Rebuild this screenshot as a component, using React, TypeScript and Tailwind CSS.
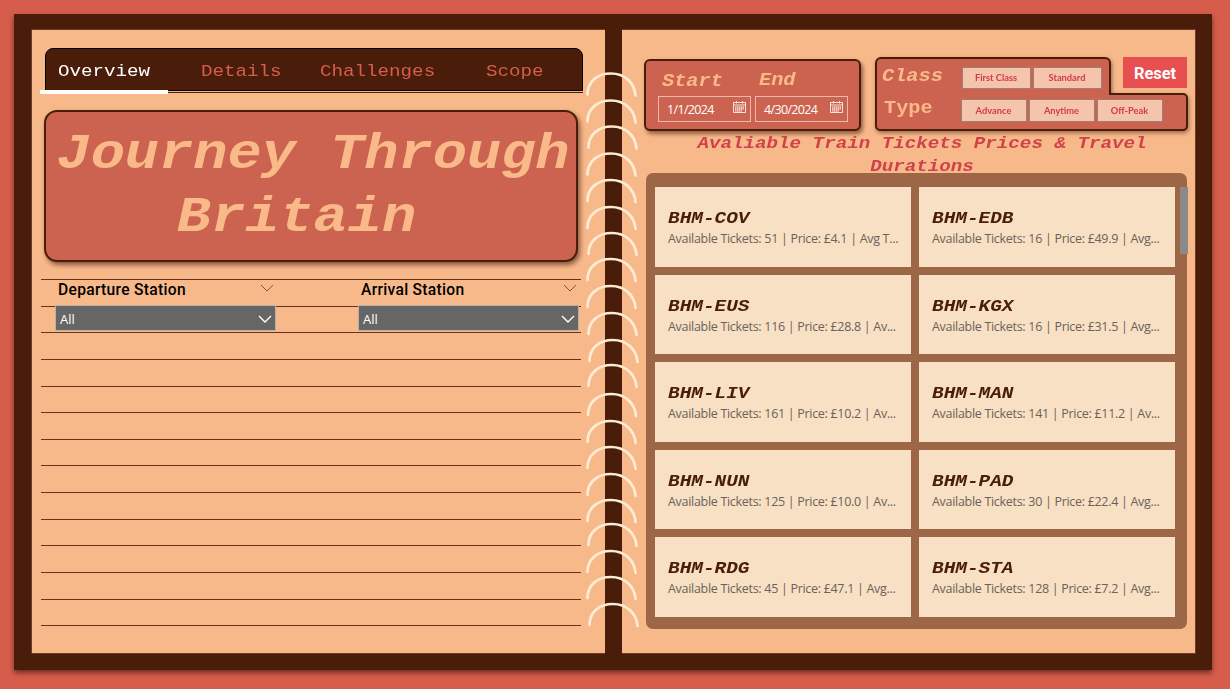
import React from "react";

const MONO = "font-['Liberation_Mono',monospace]";
const SQUAT = "inline-block origin-[50%_75%] scale-y-[0.88]";

const tabs = [
  { label: "Overview", pos: "w-[143px]", active: true },
  { label: "Details", pos: "w-[119px]" },
  { label: "Challenges", pos: "w-[166px]" },
  { label: "Scope", pos: "" },
];

const routes = [
  ["BHM-COV", "Available Tickets: 51 | Price: £4.1 | Avg T..."],
  ["BHM-EDB", "Available Tickets: 16 | Price: £49.9 | Avg..."],
  ["BHM-EUS", "Available Tickets: 116 | Price: £28.8 | Av..."],
  ["BHM-KGX", "Available Tickets: 16 | Price: £31.5 | Avg..."],
  ["BHM-LIV", "Available Tickets: 161 | Price: £10.2 | Av..."],
  ["BHM-MAN", "Available Tickets: 141 | Price: £11.2 | Av..."],
  ["BHM-NUN", "Available Tickets: 125 | Price: £10.0 | Av..."],
  ["BHM-PAD", "Available Tickets: 30 | Price: £22.4 | Avg..."],
  ["BHM-RDG", "Available Tickets: 45 | Price: £47.1 | Avg..."],
  ["BHM-STA", "Available Tickets: 128 | Price: £7.2 | Avg..."],
];

const rings = [
  [586.5, 72.5], [586.5, 99.5], [587.5, 125.5], [586.5, 152.5], [586.5, 179], [586.5, 206], [587.5, 232],
  [586.5, 258], [586.5, 285], [587.5, 312], [588.5, 339], [587.5, 364], [587, 393], [586.5, 420],
  [586.5, 446], [586.5, 473], [586.5, 499], [587.5, 523], [586.5, 550], [586.5, 576], [588.5, 603],
];

const lines = Array.from({ length: 14 }, (_, i) => i);

function Chevron({ color, width }: { color: string; width: number }) {
  return (
    <svg width="14" height="8" viewBox="0 0 14 8" fill="none" stroke={color} strokeWidth={width}>
      <path d="M1 1 L7 7 L13 1" />
    </svg>
  );
}

function CalendarIcon() {
  return (
    <svg width="13" height="13" viewBox="0 0 13 13" fill="none" stroke="#fbe6df" strokeWidth="1">
      <path d="M0.5 1.5h12v10h-12z M0.5 4h12 M3.5 0v2.5 M9.5 0v2.5" />
      <path d="M2.5 6h8 M2.5 8h8 M2.5 10h6 M2.5 5.5v5 M4.5 5.5v5 M6.5 5.5v5 M8.5 5.5v5 M10.5 5.5v3" strokeWidth="0.7" />
    </svg>
  );
}

function Slicer({ title }: { title: string }) {
  return (
    <div className="w-[221px]">
      <div className="flex h-[26px] items-start justify-between pt-px pr-[2px] pl-[3px]">
        <span className="font-['Roboto',sans-serif] text-[15.6px] leading-[20px] font-medium tracking-[0.3px] whitespace-nowrap text-black">
          {title}
        </span>
        <span className="mt-[4px]">
          <Chevron color="#7b5a45" width={1} />
        </span>
      </div>
      <div className="flex h-[26px] items-center justify-between border border-[#b9b0a8] bg-[#666666] pt-px pr-[3px] pl-[4px]">
        <span className="pt-px font-['Open_Sans',sans-serif] text-[13px] leading-none text-white">All</span>
        <Chevron color="#ffffff" width={1.4} />
      </div>
    </div>
  );
}

function DateField({ label, value, labelClass }: { label: string; value: string; labelClass: string }) {
  return (
    <div className="w-[93px]">
      <div className={`${MONO} h-[35px] text-[20.3px] leading-[22px] font-bold text-[#f9b988] italic ${labelClass}`}>
        <span className={SQUAT}>{label}</span>
      </div>
      <div className="flex h-[26px] items-center justify-between border border-[#ecb9ab] pr-[4px] pl-[8px]">
        <span className="pt-[2px] font-['Open_Sans',sans-serif] text-[12.5px] leading-none tracking-[-0.65px] text-white">
          {value}
        </span>
        <span className="-mt-[3px]">
          <CalendarIcon />
        </span>
      </div>
    </div>
  );
}

function Chip({ label, size }: { label: string; size: string }) {
  return (
    <button
      className={`flex items-center justify-center border border-[#9b8078] bg-[#f4c4ac] pr-px font-['Lato',sans-serif] text-[9.3px] leading-none font-bold whitespace-nowrap text-[#d03c48] ${size}`}
    >
      {label}
    </button>
  );
}

export default function App() {
  return (
    <div className="relative h-[689px] w-[1230px] overflow-hidden bg-[#d65d4c] pt-[14px] pl-[14px]">
      <div className="flex h-[656px] w-[1198px] bg-[#491d0a] pt-[15px] pl-[17px] shadow-[0_3px_5px_rgba(60,20,10,0.65)]">
        <section className="h-[625px] w-[574px] border border-r-0 border-[#6e3c22] bg-[#f8b98a] pt-[18px] pl-[8px]">
          <nav className="ml-[5px] flex h-[43px] w-[538px] rounded-t-[8px] border border-black bg-[#491d0a] pt-[11px] pl-[12px]">
            {tabs.map((t) => (
              <span
                key={t.label}
                className={`${MONO} text-[19.2px] leading-[22px] ${t.pos} ${t.active ? "text-white" : "text-[#d65d4c]"}`}
              >
                <span className={SQUAT}>{t.label}</span>
              </span>
            ))}
          </nav>
          <div className="ml-[5px] h-[2px] w-[538px] border-b border-[#491d0a]" />
          <div className="-mt-[3px] h-[4px] w-[128px] bg-white" />

          <h1
            className={`${MONO} mt-[16px] ml-[4px] h-[152px] w-[534px] rounded-[13px] border-2 border-[#491d0a] bg-[#cc6350] pt-[10px] pl-[4px] text-center text-[57px] leading-[63px] font-bold whitespace-nowrap text-[#f9b988] italic shadow-[2px_3px_5px_rgba(60,20,10,0.6)]`}
          >
            <span className={SQUAT}>Journey Through</span>
            <br />
            <span className={`${SQUAT} pr-[33px]`}>Britain</span>
          </h1>

          <div className="mt-[17px] ml-px grid w-[540px]">
            <div className="col-start-1 row-start-1">
              {lines.map((i) => (
                <div key={i} className="h-[26.65px] border-t border-[#6b3018]" />
              ))}
            </div>
            <div className="col-start-1 row-start-1 flex gap-[82px] pl-[14px]">
              <Slicer title="Departure Station" />
              <Slicer title="Arrival Station" />
            </div>
          </div>
        </section>

        <section className="ml-[17px] h-[625px] w-[574px] border border-l-0 border-[#6e3c22] bg-[#f8b98a] pt-[27px] pl-[22px]">
          <div className="flex h-[75px] items-start">
            <div className="mt-[2px] flex h-[72px] w-[217px] gap-[4px] rounded-[6px] border-2 border-[#491d0a] bg-[#cc6350] pl-[12px] shadow-[2px_3px_4px_rgba(60,20,10,0.55)]">
              <DateField label="Start" value="1/1/2024" labelClass="pt-[9px] pl-[4px]" />
              <DateField label="End" value="4/30/2024" labelClass="pt-[8px] pl-[4px]" />
            </div>

            <div className="ml-[14px] h-[74px] w-[313px] drop-shadow-[1px_2px_2px_rgba(60,20,10,0.5)]">
              <div className="relative flex h-[38px] w-[236px] rounded-t-[6px] border-2 border-b-0 border-[#491d0a] bg-[#cc6350] pl-[5px]">
                <span className={`${MONO} w-[80px] pt-[6px] text-[20.3px] leading-[22px] font-bold text-[#f9b988] italic`}>
                  <span className={SQUAT}>Class</span>
                </span>
                <div className="flex gap-[2px] pt-[8px]">
                  <Chip label="First Class" size="h-[22px] w-[69px]" />
                  <Chip label="Standard" size="h-[22px] w-[69px]" />
                </div>
              </div>
              <div className="-mt-[2px] flex h-[38px] w-[313px] rounded-[5px] rounded-tl-none border-2 border-[#491d0a] bg-[#cc6350] pl-[7px]">
                <span className={`${MONO} w-[77px] pt-[2px] text-[20.3px] leading-[22px] font-bold text-[#f9b988]`}>
                  <span className={SQUAT}>Type</span>
                </span>
                <div className="flex gap-[2px] pt-[4px]">
                  <Chip label="Advance" size="h-[23px] w-[66px]" />
                  <Chip label="Anytime" size="h-[23px] w-[66px]" />
                  <Chip label="Off-Peak" size="h-[23px] w-[66px]" />
                </div>
              </div>
            </div>
            <button className="-ml-[65px] flex h-[31px] w-[64px] items-center justify-center bg-[#e84f50] pt-[3px] font-['Roboto',sans-serif] text-[16.4px] leading-none font-bold text-white">
              Reset
            </button>
          </div>

          <h2
            className={`${MONO} h-[41px] w-[556px] text-center text-[19.2px] leading-[23px] font-bold whitespace-nowrap text-[#d0424b] italic`}
          >
            <span className={SQUAT}>Avaliable Train Tickets Prices &amp; Travel</span>
            <br />
            <span className={SQUAT}>Durations</span>
          </h2>

          <div className="ml-[2px] flex h-[456px] w-[541px] rounded-[7px] bg-[#9d6646] pt-[14px] pl-[9px]">
            <div className="grid h-[430px] w-[520px] shrink-0 grid-cols-2 grid-rows-5 gap-[8px]">
              {routes.map(([name, info]) => (
                <article key={name} className="min-w-0 bg-[#f8e0c4] pt-[20px] pl-[13px]">
                  <h3 className={`${MONO} text-[19.4px] leading-[22px] font-bold text-[#491d0a] italic`}>
                    <span className={SQUAT}>{name}</span>
                  </h3>
                  <p className="font-['Open_Sans',sans-serif] text-[12.5px] leading-[20px] tracking-[-0.3px] whitespace-nowrap text-[#6b6259]">
                    {info}
                  </p>
                </article>
              ))}
            </div>
            <div className="ml-[5px] h-[67px] w-[8px] shrink-0 bg-[#8b8a88]" />
          </div>
        </section>
      </div>

      <svg className="pointer-events-none absolute inset-0" width="1230" height="689" fill="none" stroke="#fdebd3" strokeWidth="2.7" strokeLinecap="round">
        {rings.map(([x, y]) => (
          <path key={y} d={`M${x + 1} ${y + 22} C${x + 1} ${y + 9} ${x + 11} ${y + 1} ${x + 24.5} ${y + 1} S${x + 48} ${y + 10} ${x + 49} ${y + 23}`} />
        ))}
      </svg>
    </div>
  );
}
